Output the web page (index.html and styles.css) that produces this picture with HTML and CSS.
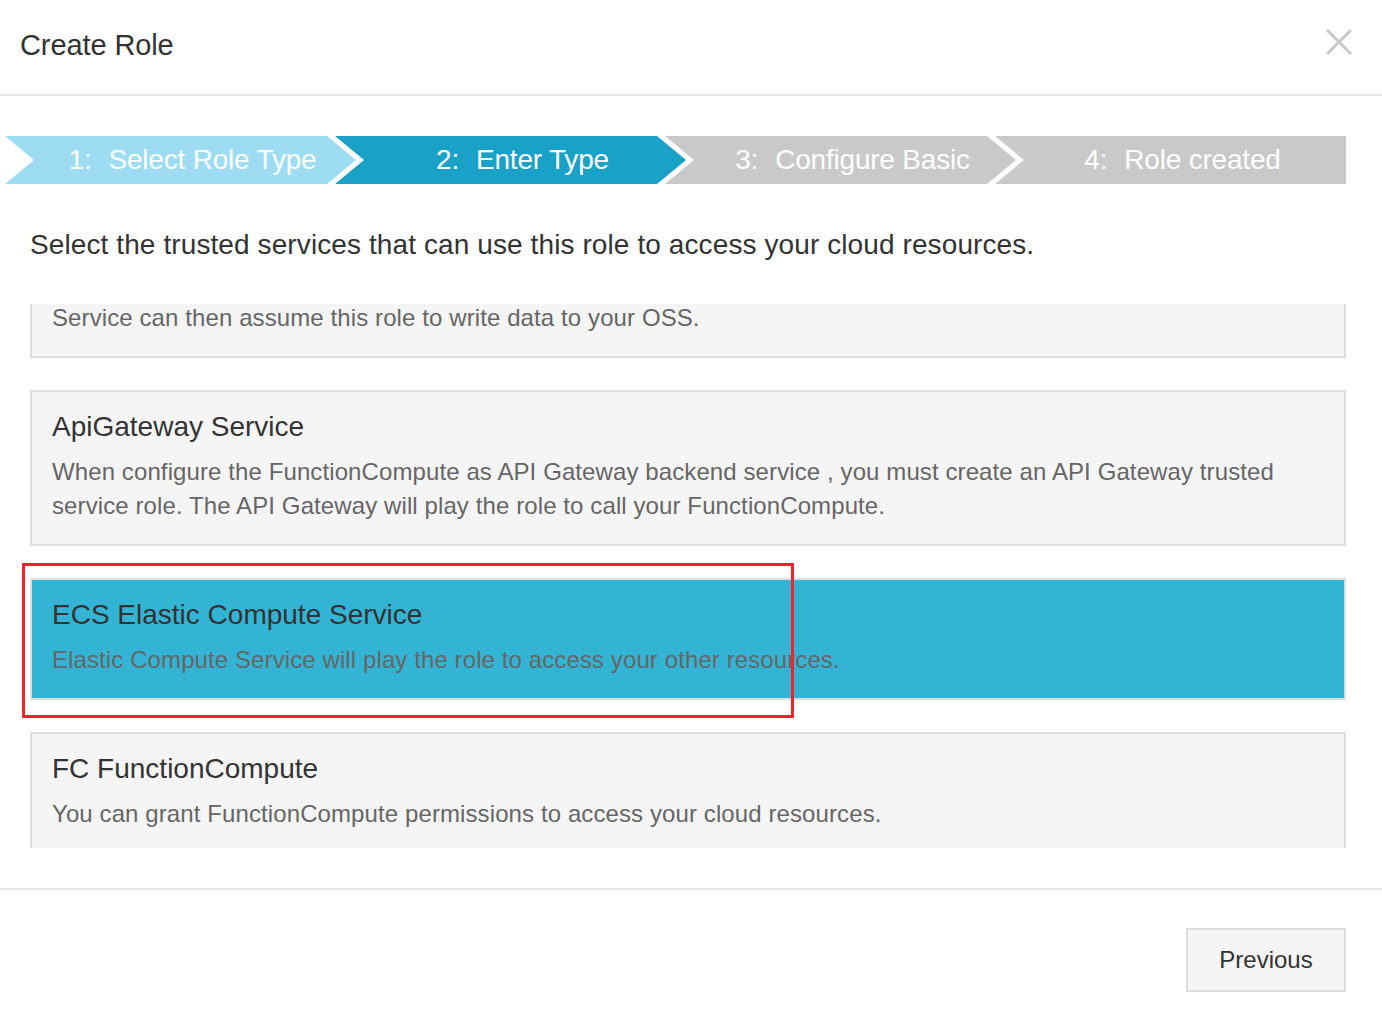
FILE: index.html
```html
<!DOCTYPE html>
<html lang="en">
<head>
<meta charset="utf-8">
<title>Create Role</title>
<link rel="stylesheet" href="styles.css">
</head>
<body>
<div class="dialog">
  <header class="dlg-header">
    <h1 class="dlg-title">Create Role</h1>
    <button class="dlg-close" aria-label="Close">
      <svg width="28" height="28" viewBox="0 0 28 28"><path d="M2 2 L26 26 M26 2 L2 26" stroke="#c9c9c9" stroke-width="3" fill="none"/></svg>
    </button>
  </header>

  <div class="dlg-body">
    <ol class="steps">
      <li class="step step-done"><span class="step-no">1:</span> Select Role Type</li>
      <li class="step step-active"><span class="step-no">2:</span> Enter Type</li>
      <li class="step step-todo"><span class="step-no">3:</span> Configure Basic</li>
      <li class="step step-todo step-last"><span class="step-no">4:</span> Role created</li>
    </ol>

    <p class="intro">Select the trusted services that can use this role to access your cloud resources.</p>

    <div class="svc-scroll">
      <div class="svc-list">
        <div class="svc">
          <div class="svc-title">LOG Log Service</div>
          <div class="svc-desc">When you grant Log Service permissions to ship logs to your OSS buckets, the Log<br>Service can then assume this role to write data to your OSS.</div>
        </div>
        <div class="svc">
          <div class="svc-title">ApiGateway Service</div>
          <div class="svc-desc">When configure the FunctionCompute as API Gateway backend service , you must create an API Gateway trusted service role. The API Gateway will play the role to call your FunctionCompute.</div>
        </div>
        <div class="svc svc-selected">
          <div class="svc-title">ECS Elastic Compute Service</div>
          <div class="svc-desc">Elastic Compute Service will play the role to access your other resources.</div>
        </div>
        <div class="svc">
          <div class="svc-title">FC FunctionCompute</div>
          <div class="svc-desc">You can grant FunctionCompute permissions to access your cloud resources.</div>
        </div>
      </div>
    </div>
  </div>

  <footer class="dlg-footer">
    <button class="btn">Previous</button>
  </footer>

  <span class="highlight"></span>
</div>
</body>
</html>
```

FILE: styles.css
```css
* { box-sizing: border-box; }
html, body {
  margin: 0;
  padding: 0;
  background: #fff;
}
body {
  font-family: "Liberation Sans", Arial, sans-serif;
  color: #333;
}
.dialog {
  width: 1382px;
  height: 1020px;
  position: relative;
}
.dlg-header {
  height: 96px;
  border-bottom: 2px solid #e6e6e6;
  display: flex;
  align-items: center;
  justify-content: space-between;
  padding: 0 29px 4px 20px;
}
.dlg-title {
  margin: 0;
  font-size: 29px;
  font-weight: normal;
  color: #333;
  letter-spacing: -0.1px;
}
.dlg-close {
  border: 0;
  background: none;
  padding: 0;
  width: 28px;
  height: 28px;
  display: flex;
  margin-bottom: 6px;
}
.dlg-body {
  padding: 40px 36px 0 30px;
}
.steps {
  list-style: none;
  margin: 0 0 0 -25px;
  padding: 0;
  display: flex;
}
.step {
  width: 351px;
  height: 48px;
  flex: none;
  margin-left: -21px;
  padding: 0 5px 0 29px;
  display: flex;
  align-items: center;
  justify-content: center;
  color: #fff;
  font-size: 28px;
  letter-spacing: -0.2px;
  white-space: nowrap;
  clip-path: polygon(0 0, calc(100% - 29px) 0, 100% 50%, calc(100% - 29px) 100%, 0 100%, 29px 50%);
}
.step-no {
  margin-right: 17px;
}
.step:first-child { margin-left: 0; }
.step-done { background: #9ddcf2; }
.step-active { background: #1aa1c8; }
.step-todo { background: #c9c9c9; }
.step-last {
  clip-path: polygon(0 0, 100% 0, 100% 100%, 0 100%, 29px 50%);
  padding: 0 0 0 24px;
}
.intro {
  margin: 43px 0 41px;
  font-size: 28px;
  line-height: 36px;
  letter-spacing: 0.1px;
  color: #333;
}
.svc-scroll {
  height: 544px;
  overflow: hidden;
}
.svc-list {
  margin-top: -102px;
  display: flex;
  flex-direction: column;
  gap: 32px;
}
.svc {
  background: #f5f5f5;
  border: 2px solid #dedede;
  padding: 18px 20px 21px;
}
.svc-title {
  font-size: 28px;
  line-height: 34px;
  color: #333;
}
.svc-desc {
  margin-top: 11px;
  font-size: 24px;
  line-height: 34px;
  letter-spacing: 0.1px;
  color: #666;
}
.svc-selected {
  background: #34b4d4;
}
.highlight {
  position: absolute;
  left: 22px;
  top: 563px;
  width: 772px;
  height: 155px;
  border: 3px solid #f5222d;
  pointer-events: none;
}
.dlg-footer {
  margin-top: 40px;
  border-top: 2px solid #e6e6e6;
  padding: 38px 36px 0 0;
  display: flex;
  justify-content: flex-end;
}
.btn {
  width: 160px;
  height: 64px;
  background: #f5f5f5;
  border: 2px solid #dedede;
  font-family: "Liberation Sans", Arial, sans-serif;
  font-size: 24px;
  color: #333;
  padding: 0;
}
```
